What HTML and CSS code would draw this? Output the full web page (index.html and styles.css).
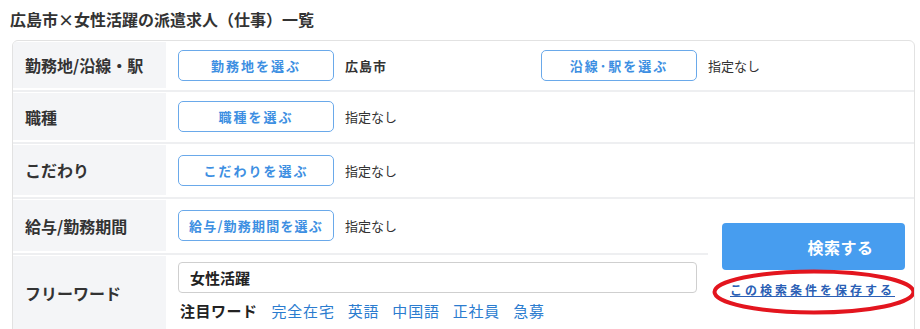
FILE: index.html
```html
<!DOCTYPE html>
<html lang="ja">
<head>
<meta charset="utf-8">
<link rel="stylesheet" href="styles.css">
</head>
<body>
<div class="page">
  <h1 class="title">広島市×女性活躍の派遣求人（仕事）一覧</h1>
  <div class="box">
    <div class="row">
      <div class="label h46">勤務地/沿線・駅</div>
      <div class="content">
        <div class="group">
          <button class="sel">勤務地を選ぶ</button>
          <span class="val bold">広島市</span>
        </div>
        <div class="group">
          <button class="sel">沿線･駅を選ぶ</button>
          <span class="val">指定なし</span>
        </div>
      </div>
    </div>
    <div class="row">
      <div class="label h47">職種</div>
      <div class="content">
        <button class="sel">職種を選ぶ</button>
        <span class="val">指定なし</span>
      </div>
    </div>
    <div class="row">
      <div class="label h50">こだわり</div>
      <div class="content">
        <button class="sel">こだわりを選ぶ</button>
        <span class="val">指定なし</span>
      </div>
    </div>
    <div class="lower">
      <div class="lower-left">
        <div class="row">
          <div class="label h51">給与/勤務期間</div>
          <div class="content">
            <button class="sel tight">給与/勤務期間を選ぶ</button>
            <span class="val">指定なし</span>
          </div>
        </div>
        <div class="row last">
          <div class="label h73">フリーワード</div>
          <div class="content free">
            <div class="input">女性活躍</div>
            <div class="words">
              <span class="words-title">注目ワード</span>
              <a class="word">完全在宅</a>
              <a class="word">英語</a>
              <a class="word">中国語</a>
              <a class="word">正社員</a>
              <a class="word">急募</a>
            </div>
          </div>
        </div>
      </div>
      <div class="search-area">
        <button class="search">検索する</button>
        <a class="save">この検索条件を保存する</a>
        <svg class="circle" width="206" height="48" viewBox="0 0 206 48">
          <ellipse cx="103" cy="24" rx="99.5" ry="20.5" fill="none" stroke="#e3151e" stroke-width="4"/>
        </svg>
      </div>
    </div>
  </div>
</div>
</body>
</html>
```
FILE: styles.css
```css
* { box-sizing: border-box; }
html, body { margin: 0; padding: 0; background: #fff; }
body {
  font-family: "Noto Sans CJK JP", "Noto Sans", sans-serif;
  color: #333;
}
.page { padding: 9px 5px 0 10px; }
.title {
  margin: 0 0 11px 0;
  font-size: 16px;
  line-height: 20px;
  font-weight: bold;
  color: #333;
}
.box {
  margin-left: 2px;
  width: 903px;
  height: 300px;
  border: 1px solid #e2e2e2;
  border-radius: 6px;
  overflow: hidden;
}
.row {
  display: flex;
  padding: 1px 0 2px 0;
  border-bottom: 2px solid #eeeff1;
}
.row.last { border-bottom: none; }
.label {
  width: 153px;
  flex: none;
  background: #f4f5f7;
  display: flex;
  align-items: center;
  padding-left: 12px;
  font-size: 16px;
  font-weight: bold;
  color: #333;
}
.h46 { height: 46px; }
.h47 { height: 47px; }
.h50 { height: 50px; }
.h51 { height: 51px; }
.h73 { height: 74px; }
.content {
  flex: 1;
  display: flex;
  align-items: center;
  padding-left: 12px;
}
.group { display: flex; align-items: center; width: 363px; }
.sel {
  width: 156px;
  height: 31px;
  flex: none;
  background: #fff;
  border: 1.5px solid #6aa9ea;
  border-radius: 5px;
  color: #3d8fe2;
  font-family: inherit;
  font-size: 13px;
  font-weight: bold;
  letter-spacing: 2px;
  padding: 0;
  text-align: center;
}
.sel.tight { letter-spacing: 1.2px; white-space: nowrap; }
.val {
  margin-left: 11px;
  font-size: 13px;
  color: #333;
}
.val.bold { font-weight: bold; letter-spacing: 1px; }
.lower { display: flex; }
.lower-left { width: 695px; flex: none; }
.content.free {
  flex-direction: column;
  align-items: stretch;
  justify-content: flex-start;
  padding-top: 6px;
  padding-right: 11px;
}
.input {
  height: 31px;
  border: 1px solid #cfcfcf;
  border-radius: 4px;
  padding-left: 11px;
  font-size: 15px;
  font-weight: bold;
  line-height: 29px;
  color: #222;
}
.words {
  display: flex;
  align-items: center;
  margin-top: 9px;
  padding-left: 2px;
  font-size: 15px;
  line-height: 18px;
}
.words-title { font-weight: bold; color: #222; margin-right: 14px; letter-spacing: 0.5px; }
.word { color: #2b7ccf; margin-right: 13px; letter-spacing: 0.8px; }
.search-area {
  flex: 1;
  position: relative;
  display: flex;
  flex-direction: column;
  align-items: flex-start;
  padding: 24px 0 0 14px;
}
.search {
  width: 183px;
  height: 47px;
  border: none;
  border-radius: 4px;
  background: #479def;
  color: #fff;
  font-family: inherit;
  font-size: 16px;
  font-weight: bold;
  padding: 0 0 0 54px;
  letter-spacing: 0.5px;
}
.save {
  margin: 12px 0 0 8px;
  font-size: 12px;
  line-height: 16px;
  font-weight: bold;
  letter-spacing: 3px;
  color: #2b5fb5;
  text-decoration: underline;
  white-space: nowrap;
}
.circle {
  position: absolute;
  left: 3px;
  top: 69px;
}
```
